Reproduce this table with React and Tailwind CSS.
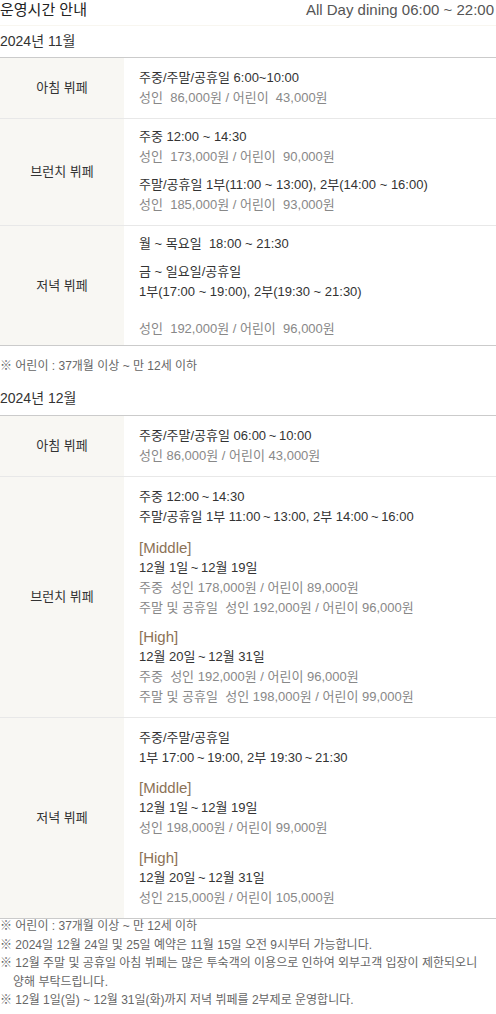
const sp = '\u00a0'
const th = '\u2009'

function Row({ label, children, pad }) {
  return (
    <div className="flex border-t border-[#e8e8e8] first:border-t-0">
      <div className="w-[124px] shrink-0 bg-[#f8f7f3] flex items-center justify-center text-[13px] text-[#333]">
        {label}
      </div>
      <div className={`flex-1 pl-[15px] text-[13px] leading-[20px] text-[#333] ${pad}`}>{children}</div>
    </div>
  )
}

const Gray = ({ children, className = '' }) => <p className={`text-[#888] ${className}`}>{children}</p>
const Tag = ({ children }) => <p className="text-[15px] text-[#8c7256]">{children}</p>

export default function App() {
  return (
    <div className="w-[496px] bg-white font-['Liberation_Sans','Noto_Sans_CJK_KR',sans-serif]">
      <div className="h-[26px] flex justify-between items-start border-b border-[#f8f6f0]">
        <h2 className="text-[15px] leading-[20px] text-[#222]">운영시간 안내</h2>
        <span className="text-[15px] leading-[20px] text-[#555] pr-[2px]">All Day dining 06:00 ~ 22:00</span>
      </div>

      <div className="h-[31px] flex items-center text-[14px] text-[#333]">2024년 11월</div>

      <div className="border-t border-b border-[#cbcbcb]">
        <Row label="아침 뷔페" pad="pt-[10px] pb-[10px]">
          <p>주중/주말/공휴일 6:00~10:00</p>
          <Gray>성인{sp} 86,000원 / 어린이{sp} 43,000원</Gray>
        </Row>
        <Row label="브런치 뷔페" pad="pt-[8px] pb-[10px]">
          <p>주중 12:00 ~ 14:30</p>
          <Gray>성인{sp} 173,000원 / 어린이{sp} 90,000원</Gray>
          <p className="mt-[8px]">주말/공휴일 1부(11:00 ~ 13:00), 2부(14:00 ~ 16:00)</p>
          <Gray>성인{sp} 185,000원 / 어린이{sp} 93,000원</Gray>
        </Row>
        <Row label="저녁 뷔페" pad="pt-[8px] pb-[6px]">
          <p>월 ~ 목요일{sp} 18:00 ~ 21:30</p>
          <p className="mt-[8px]">금 ~ 일요일/공휴일</p>
          <p>1부(17:00 ~ 19:00), 2부(19:30 ~ 21:30)</p>
          <Gray className="mt-[17px]">성인{sp} 192,000원 / 어린이{sp} 96,000원</Gray>
        </Row>
      </div>

      <p className="pt-[11px] pb-[9px] text-[12px] leading-[18px] text-[#666]">※ 어린이 : 37개월 이상 ~ 만 12세 이하</p>

      <div className="h-[31px] flex items-center pb-[2px] text-[14px] text-[#333]">2024년 12월</div>

      <div className="border-t border-b border-[#cbcbcb]">
        <Row label="아침 뷔페" pad="pt-[10px] pb-[10px]">
          <p>주중/주말/공휴일 06:00{th}~{th}10:00</p>
          <Gray>성인 86,000원 / 어린이 43,000원</Gray>
        </Row>
        <Row label="브런치 뷔페" pad="pt-[10px] pb-[10px]">
          <p>주중 12:00{th}~{th}14:30</p>
          <p>주말/공휴일 1부 11:00{th}~{th}13:00, 2부 14:00{th}~{th}16:00</p>
          <div className="mt-[11px]">
            <Tag>[Middle]</Tag>
            <p>12월 1일{th}~{th}12월 19일</p>
            <Gray>주중{sp} 성인 178,000원 / 어린이 89,000원</Gray>
            <Gray>주말 및 공휴일{sp} 성인 192,000원 / 어린이 96,000원</Gray>
          </div>
          <div className="mt-[9px]">
            <Tag>[High]</Tag>
            <p>12월 20일{th}~{th}12월 31일</p>
            <Gray>주중{sp} 성인 192,000원 / 어린이 96,000원</Gray>
            <Gray>주말 및 공휴일{sp} 성인 198,000원 / 어린이 99,000원</Gray>
          </div>
        </Row>
        <Row label="저녁 뷔페" pad="pt-[10px] pb-[10px]">
          <p>주중/주말/공휴일</p>
          <p>1부 17:00{th}~{th}19:00, 2부 19:30{th}~{th}21:30</p>
          <div className="mt-[10px]">
            <Tag>[Middle]</Tag>
            <p>12월 1일{th}~{th}12월 19일</p>
            <Gray>성인 198,000원 / 어린이 99,000원</Gray>
          </div>
          <div className="mt-[10px]">
            <Tag>[High]</Tag>
            <p>12월 20일{th}~{th}12월 31일</p>
            <Gray>성인 215,000원 / 어린이 105,000원</Gray>
          </div>
        </Row>
      </div>

      <ul className="-mt-[2px] text-[12px] leading-[18.5px] text-[#666]">
        <li>※ 어린이 : 37개월 이상 ~ 만 12세 이하</li>
        <li>※ 2024일 12월 24일 및 25일 예약은 11월 15일 오전 9시부터 가능합니다.</li>
        <li className="pl-[13px] -indent-[13px]">
          ※ 12월 주말 및 공휴일 아침 뷔페는 많은 투숙객의 이용으로 인하여 외부고객 입장이 제한되오니
          <br />
          양해 부탁드립니다.
        </li>
        <li>※ 12월 1일(일) ~ 12월 31일(화)까지 저녁 뷔페를 2부제로 운영합니다.</li>
      </ul>
    </div>
  )
}
